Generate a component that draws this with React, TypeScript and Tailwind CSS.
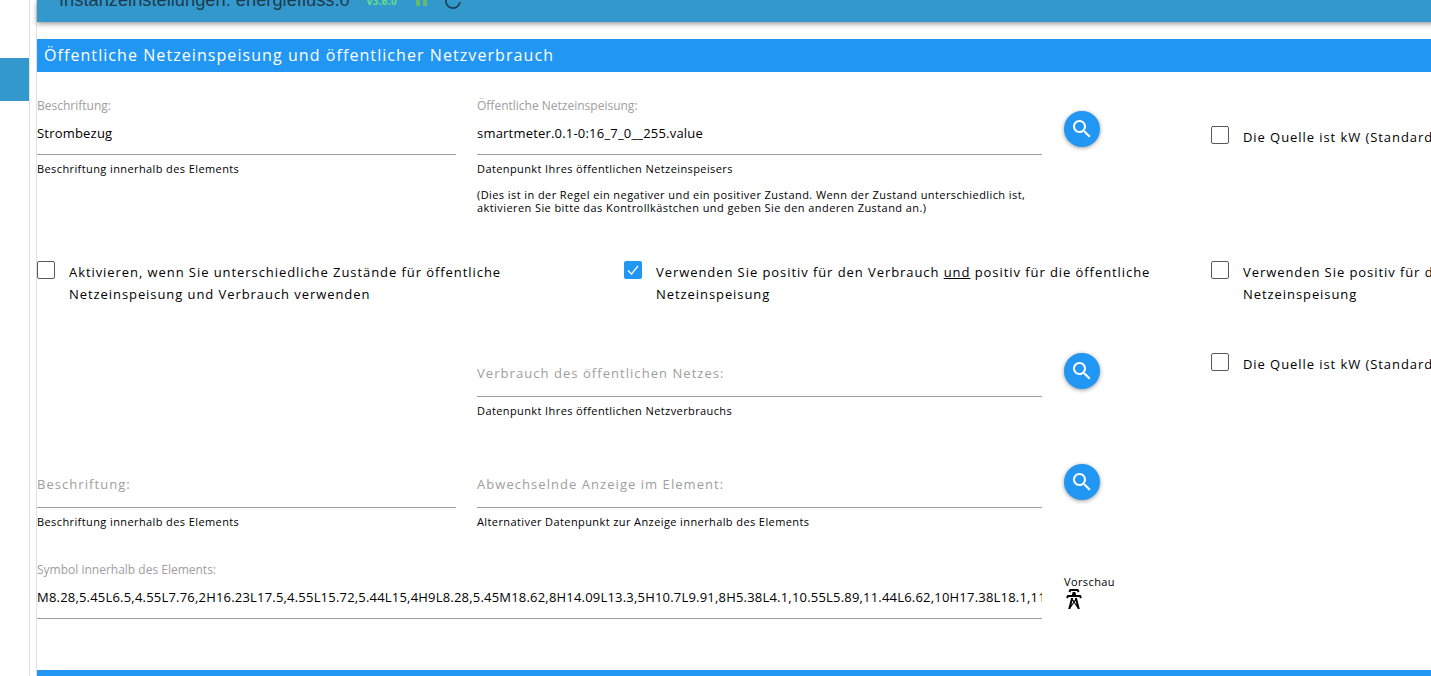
const FONT = "font-['Open_Sans','Liberation_Sans',sans-serif]";

const TOWER =
  "M8.28,5.45L6.5,4.55L7.76,2H16.23L17.5,4.55L15.72,5.44L15,4H9L8.28,5.45M18.62,8H14.09L13.3,5H10.7L9.91,8H5.38L4.1,10.55L5.89,11.44L6.62,10H17.38L18.1,11.45L19.89,10.56L18.62,8M17.77,22H15.7L15.46,21.1L12,15.9L8.53,21.1L8.3,22H6.23L9.12,11H11.19L10.83,12.35L12,14.1L13.16,12.35L12.81,11H14.88L17.77,22M11.4,15L10.5,13.65L9.32,18.13L11.4,15M14.68,18.12L13.5,13.64L12.6,15L14.68,18.12Z";

function SearchButton() {
  return (
    <button className="flex h-9 w-9 items-center justify-center rounded-full bg-[#2196f3] shadow-[0_1px_4px_rgba(0,0,0,0.4)]">
      <svg width="24" height="24" viewBox="0 0 24 24" fill="#fff">
        <path d="M15.5 14h-.79l-.28-.27C15.41 12.59 16 11.11 16 9.5 16 5.91 13.09 3 9.5 3S3 5.91 3 9.5 5.91 16 9.5 16c1.61 0 3.09-.59 4.23-1.57l.27.28v.79l5 4.99L20.49 19l-4.99-5zm-6 0C7.01 14 5 11.99 5 9.5S7.01 5 9.5 5 14 7.01 14 9.5 11.99 14 9.5 14z" />
      </svg>
    </button>
  );
}

function Checkbox({ checked }: { checked?: boolean }) {
  if (checked) {
    return (
      <span className="flex h-[18px] w-[18px] shrink-0 items-center justify-center rounded-[2px] bg-[#2196f3]">
        <svg width="14" height="14" viewBox="0 0 14 14" fill="none" stroke="#fff" strokeWidth="1.2">
          <path d="M2 7.5L5.5 11L12 3" />
        </svg>
      </span>
    );
  }
  return <span className="block h-[18px] w-[18px] shrink-0 rounded-[2px] border border-[#5a5a5a] bg-white" />;
}

function Field({
  label,
  value,
  help,
  big,
}: {
  label?: string;
  value?: string;
  help?: string;
  big?: string;
}) {
  return (
    <div className="w-full">
      <div className="h-[17px] text-[12px] leading-[17px] text-[#9e9e9e]">{label}</div>
      {big ? (
        <div className="h-[41px] overflow-hidden whitespace-nowrap border-b border-[#9e9e9e] pt-[7px] text-[13px] leading-[20px] tracking-[1.05px] text-[#9e9e9e]">
          {big}
        </div>
      ) : (
        <div className="h-[41px] overflow-hidden whitespace-nowrap border-b border-[#9e9e9e] pt-[9px] text-[13px] leading-[20px] tracking-[0.2px] text-black">
          {value}
        </div>
      )}
      {help && <div className="mt-[7px] text-[11px] leading-[14px] tracking-[0.4px] text-black">{help}</div>}
    </div>
  );
}

function CheckRow({ checked, children }: { checked?: boolean; children: React.ReactNode }) {
  return (
    <div className="flex items-start gap-[14px]">
      <Checkbox checked={checked} />
      <div className="text-[13px] leading-[22px] tracking-[0.93px] text-black">{children}</div>
    </div>
  );
}

export default function App() {
  return (
    <div className={`flex h-[676px] w-[1431px] overflow-hidden bg-white ${FONT}`}>
      {/* left nav */}
      <div className="h-full w-[30px] shrink-0 border-r border-[#e0e0e0] pt-[58px]">
        <div className="h-[43px] w-[29px] bg-[#3399cc]" />
      </div>
      <div className="h-full w-[7px] shrink-0 border-r border-[#e0e0e0]" />

      <div className="w-[1761px] shrink-0">
        {/* header bar, cut by the top of the window */}
        <div className="flex h-[22px] items-start overflow-hidden bg-[#3399cc] pl-[22px] shadow-[0_2px_5px_rgba(0,0,0,0.4)]">
          <span className="-mt-[11px] whitespace-nowrap font-['Liberation_Sans'] text-[18.3px] leading-[22px] text-[#1f3a4d]">
            Instanzeinstellungen: energiefluss.0
          </span>
          <span className="-mt-[6px] ml-[17px] text-[10px] font-bold leading-[14px] tracking-[0.3px] text-[#5fe08a]">
            v3.6.0
          </span>
          <svg width="11" height="7" viewBox="0 0 11 7" fill="#66bb6a" className="ml-[19px]">
            <rect x="0" y="-2" width="4" height="8" />
            <rect x="7" y="-2" width="4" height="8" />
          </svg>
          <svg width="16" height="9" viewBox="0 0 16 9" fill="none" stroke="#1f3a4d" strokeWidth="1.6" className="ml-[18px]">
            <path d="M1 0A7 7 0 0 0 15 2" />
          </svg>
        </div>

        <div className="mt-[17px] flex h-[33px] items-center bg-[#2196f3] pb-[1px] pl-[7px] text-[16px] font-medium tracking-[1.07px] text-white">
          Öffentliche Netzeinspeisung und öffentlicher Netzverbrauch
        </div>

        {/* row 1 */}
        <div className="mt-[25px] flex h-[164px]">
          <div className="w-[419px]">
            <Field label="Beschriftung:" value="Strombezug" help="Beschriftung innerhalb des Elements" />
          </div>
          <div className="ml-[21px] w-[565px]">
            <Field
              label="Öffentliche Netzeinspeisung:"
              value="smartmeter.0.1-0:16_7_0__255.value"
              help="Datenpunkt Ihres öffentlichen Netzeinspeisers"
            />
            <div className="mt-[12px] text-[11px] leading-[13px] tracking-[0.42px] text-black">
              (Dies ist in der Regel ein negativer und ein positiver Zustand. Wenn der Zustand unterschiedlich ist,
              <br />
              aktivieren Sie bitte das Kontrollkästchen und geben Sie den anderen Zustand an.)
            </div>
          </div>
          <div className="ml-[22px] mt-[14px] w-[147px]">
            <SearchButton />
          </div>
          <div className="mt-[29px]">
            <CheckRow>Die Quelle ist kW (Standard: Watt)</CheckRow>
          </div>
        </div>

        {/* row 2 */}
        <div className="flex h-[78px]">
          <div className="w-[587px] pr-[100px]">
            <CheckRow>
              Aktivieren, wenn Sie unterschiedliche Zustände für öffentliche Netzeinspeisung und Verbrauch verwenden
            </CheckRow>
          </div>
          <div className="w-[587px] pr-[40px]">
            <CheckRow checked>
              Verwenden Sie positiv für den Verbrauch <u>und</u> positiv für die öffentliche Netzeinspeisung
            </CheckRow>
          </div>
          <div className="w-[587px] pr-[40px]">
            <CheckRow>
              Verwenden Sie positiv für den Verbrauch <u>und</u> negativ für die öffentliche Netzeinspeisung
            </CheckRow>
          </div>
        </div>

        {/* row 3 */}
        <div className="flex h-[111px]">
          <div className="ml-[440px] w-[565px]">
            <Field big="Verbrauch des öffentlichen Netzes:" help="Datenpunkt Ihres öffentlichen Netzverbrauchs" />
          </div>
          <div className="ml-[22px] mt-[14px] w-[147px]">
            <SearchButton />
          </div>
          <div className="mt-[14px]">
            <CheckRow>Die Quelle ist kW (Standard: Watt)</CheckRow>
          </div>
        </div>

        {/* row 4 */}
        <div className="flex h-[111px]">
          <div className="w-[419px]">
            <Field big="Beschriftung:" help="Beschriftung innerhalb des Elements" />
          </div>
          <div className="ml-[21px] w-[565px]">
            <Field big="Abwechselnde Anzeige im Element:" help="Alternativer Datenpunkt zur Anzeige innerhalb des Elements" />
          </div>
          <div className="ml-[22px] mt-[14px]">
            <SearchButton />
          </div>
        </div>

        {/* row 5 */}
        <div className="flex h-[109px]">
          <div className="w-[1005px]">
            <Field label="Symbol innerhalb des Elements:" value={TOWER} />
          </div>
          <div className="ml-[22px] pt-[14px] text-[11px] leading-[14px] tracking-[0.4px] text-black">
            Vorschau
            <svg width="24" height="24" viewBox="0 0 24 24" fill="#000" className="-ml-[2px] -mt-[2px]">
              <path d={TOWER} />
            </svg>
          </div>
        </div>

        <div className="h-[6px] bg-[#2196f3]" />
      </div>
    </div>
  );
}
